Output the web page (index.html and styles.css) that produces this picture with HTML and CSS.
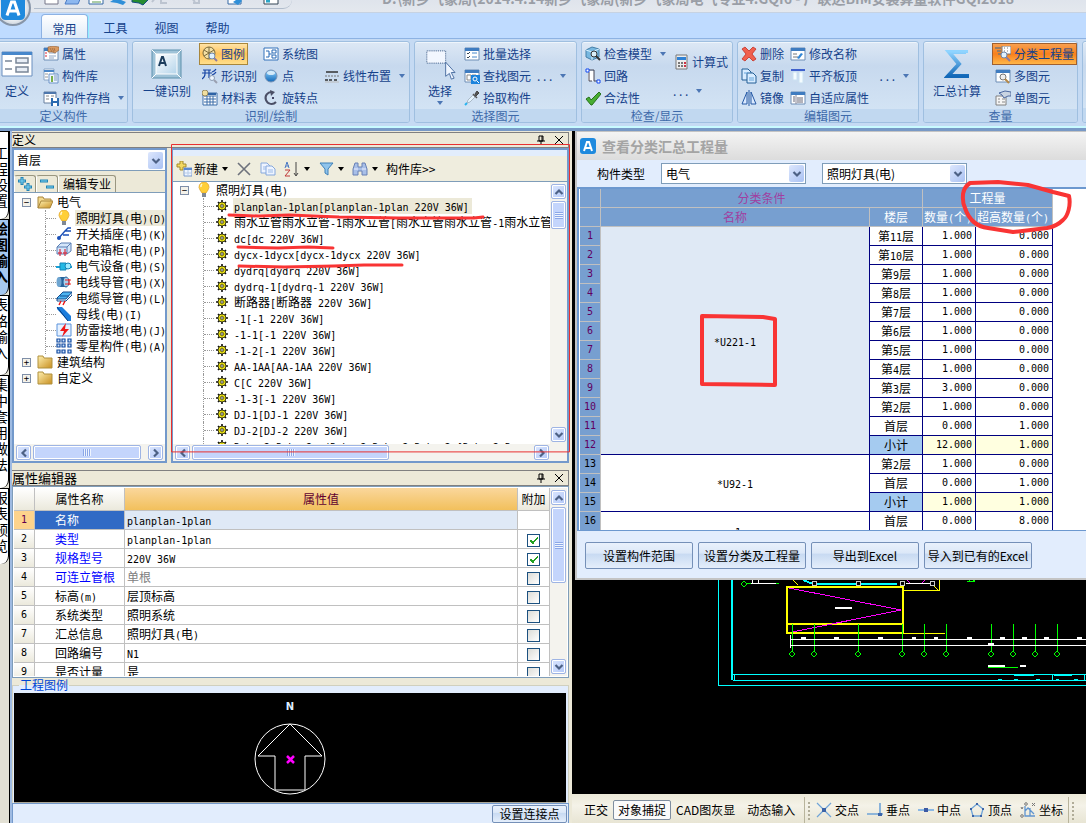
FILE: index.html
```
<!DOCTYPE html>
<html lang="zh-CN">
<head>
<meta charset="utf-8">
<title>安装算量软件</title>
<link rel="stylesheet" href="styles.css">
</head>
<body>
<svg class="defs" width="0" height="0" aria-hidden="true">
<defs>
<linearGradient id="gold" x1="0" y1="0" x2="1" y2="1"><stop offset="0" stop-color="#fff0b0"/><stop offset="1" stop-color="#c88f20"/></linearGradient>
<linearGradient id="blue" x1="0" y1="0" x2="0" y2="1"><stop offset="0" stop-color="#8fd4ff"/><stop offset="1" stop-color="#1268b8"/></linearGradient>
<linearGradient id="glass" x1="0" y1="0" x2="1" y2="1"><stop offset="0" stop-color="#fff"/><stop offset="1" stop-color="#b4d4ea"/></linearGradient>
<symbol id="win" viewBox="0 0 16 16"><path d="M1 2h14v12H1z" fill="#fff" stroke="#6d8db5"/><path d="M1 2h14v3H1z" fill="#3f7cc0"/></symbol>
<symbol id="lens" viewBox="0 0 16 16"><path d="M11 11l4 4" stroke="#8c7aa0" stroke-width="2"/><circle cx="9" cy="9" r="3" fill="#dff1ff" stroke="#7187a8"/></symbol>
<symbol id="prop" viewBox="0 0 16 16"><use href="#win"/><path d="M2 7h2M2 10h2" stroke="#d23"/><path d="M6 7h7M6 10h7M6 12h5" stroke="#90a8c8"/><path d="M5 1l5-1 6 1v3l-4 3-3-1-4 0z" fill="#d99a62" stroke="#8a5a34" stroke-width=".6"/><path d="M7 2l2 4M9 2l2 4M11 2l1 3" stroke="#8a5a34" stroke-width=".6"/></symbol>
<symbol id="lib" viewBox="0 0 16 16"><path d="M1 1h10v11H1z" fill="#fff" stroke="#8aa5c5"/><path d="M1 3h10" stroke="#4a86c8" stroke-width="2"/><path d="M2 6h3M2 9h3" stroke="#999"/><path d="M6 6h9v9H6z" fill="#eef5ff" stroke="#6f95c8"/><path d="M8 8h2v6H8z" fill="#79b04a"/><path d="M11 8h3M11 10h3M11 12h3" stroke="#7e9ac0"/></symbol>
<symbol id="save" viewBox="0 0 16 16"><path d="M1 2h12v11H1z" fill="#fff" stroke="#667f9f"/><path d="M1 3h12" stroke="#4e77ac" stroke-width="2"/><path d="M3 6h3M3 9h3M8 6h3" stroke="#888"/><path d="M8 8h8v8H8z" fill="#2a6ab0"/><path d="M10 8h4v3h-4zM10 13h4v3h-4z" fill="#fff"/></symbol>
<symbol id="legend" viewBox="0 0 16 16"><circle cx="7" cy="7" r="6" fill="#f4e0a4" stroke="#7a6a3c"/><path d="M2 4l10 6M12 4L2 10M7 1v12" stroke="#7a6a3c"/><path d="M12 12l3 3" stroke="#8c7aa0" stroke-width="2"/><circle cx="10" cy="10" r="3" fill="#dff1ff" stroke="#7187a8"/></symbol>
<symbol id="shape" viewBox="0 0 16 16"><path d="M1 2h8M0 5h10M3 2v4q0 3-3 5M7 2v8M14 1q-1 2-4 3M14 4q-1 2-4 3" stroke="#1745a4" fill="none" stroke-width="1.200"/><path d="M12 12l3 3" stroke="#9aa0b0" stroke-width="2"/><circle cx="10" cy="10" r="2.500" fill="#eef6ff" stroke="#8c9cb4"/></symbol>
<symbol id="mat" viewBox="0 0 16 16"><path d="M1 3h14v12H1z" fill="#fff" stroke="#3a6da8"/><path d="M2 6h12M2 9h12M2 12h12M5 6v9M8 6v9M11 6v9" stroke="#3a6da8"/><path d="M6 4h8" stroke="#2d62a5" stroke-width="2"/><circle cx="3" cy="3" r="3" fill="#f0dfa0" stroke="#7a6a3c" stroke-width=".7"/></symbol>
<symbol id="sys" viewBox="0 0 16 16"><path d="M1 2h14v12H1z" fill="#fff" stroke="#3573ba"/><path d="M3 5h3M3 11h3M6 8h3M6 5v6M9 4h4v3H9zM9 9h4v3H9z" fill="none" stroke="#2769b4"/></symbol>
<symbol id="dot" viewBox="0 0 16 16"><circle cx="8" cy="8" r="6" fill="url(#blue)" stroke="#7892b5"/><ellipse cx="8" cy="5" rx="4" ry="2" fill="#fff" opacity=".7"/></symbol>
<symbol id="rot" viewBox="0 0 16 16"><path d="M9 2a6 6 0 1 0 4 10" fill="none" stroke="#4b4f66" stroke-width="2"/><path d="M7 0l5 2-4 4z" fill="#4b4f66"/><path d="M9 8h2" stroke="#446" stroke-width="2"/></symbol>
<symbol id="lines" viewBox="0 0 16 16"><path d="M2 4h12M1 12h3M5 12h3M10 12h3" stroke="#333" stroke-width="1.3"/><path d="M1 8h14" stroke="#777" stroke-dasharray="2 1"/><path d="M1 14h14" stroke="#bbb"/></symbol>
<symbol id="check" viewBox="0 0 16 16"><use href="#win"/><path d="M3 7l1 1 2-2M3 11l1 1 2-2" fill="none" stroke="#345"/><path d="M8 7h5M8 11h5" stroke="#4989cc"/></symbol>
<symbol id="find" viewBox="0 0 16 16"><use href="#win"/><path d="M3 7h4v5H3zM8 7h4v3H8z" fill="none" stroke="#888"/><path d="M7 7h9v9H7z" fill="#1c83dc"/><circle cx="11" cy="11" r="2" fill="none" stroke="#fff"/><path d="M13 13l2 2" stroke="#fff"/></symbol>
<symbol id="pick" viewBox="0 0 16 16"><path d="M3 13l1-3 5-5 2 2-5 5z" fill="#e6f5ff" stroke="#9eacba" stroke-width=".8"/><path d="M9 4l4 4" stroke="#555" stroke-width="1.500"/><path d="M11 4l2-3 2 2-3 3z" fill="#555" stroke="#444"/><path d="M1 15l2-2" stroke="#28b4f0" stroke-width="2"/></symbol>
<symbol id="model" viewBox="0 0 16 16"><path d="M1 4l6-3 7 2v8l-7 3-6-3z" fill="#78b8e0" stroke="#457fa8"/><path d="M1 4l6 2 7-3M7 6v8" fill="none" stroke="#d6f0ff"/><circle cx="9" cy="8" r="3" fill="#d8eef8" stroke="#333"/><path d="M11 10l4 4" stroke="#333" stroke-width="2"/></symbol>
<symbol id="loop" viewBox="0 0 16 16"><path d="M3 3h6v10H3z" fill="#fff"/><path d="M3 2h6v11h4M4 4v9h3" fill="none" stroke="#445"/><path d="M1 1h3v3H1zM12 12h3v3h-3z" fill="#fff" stroke="#1048f0"/></symbol>
<symbol id="tick" viewBox="0 0 16 16"><path d="M1 9l3-2 2 3 8-8 2 2-9 11H6z" fill="#48ad32" stroke="#27721c"/></symbol>
<symbol id="calc" viewBox="0 0 16 16"><path d="M3 1h11v14H3z" fill="#eee" stroke="#777"/><path d="M4 3h9v3H4z" fill="#2f81d4"/><path d="M5 9h2M8 9h2M5 12h2M8 12h2" stroke="#777" stroke-width="2"/><path d="M11 9h2M11 12h2" stroke="#c34" stroke-width="2"/></symbol>
<symbol id="del" viewBox="0 0 16 16"><path d="M1 3l3-2 4 4 4-4 3 2-4 5 4 5-3 2-4-4-4 4-3-2 4-5z" fill="#f0604f" stroke="#c43024" stroke-width=".8"/></symbol>
<symbol id="copy" viewBox="0 0 16 16"><path d="M1 1h6l3 3v8H1z" fill="#d8ecff" stroke="#235f96"/><path d="M6 5h6l3 3v7H6z" fill="#d8ecff" stroke="#235f96"/><path d="M3 5h4M8 10h5M8 12h5" stroke="#65a4da"/></symbol>
<symbol id="pages" viewBox="0 0 16 16"><path d="M1 2h6l3 3v7H1z" fill="#eef4ff" stroke="#86a8dc"/><path d="M6 5h6l3 3v6H6z" fill="#eef4ff" stroke="#86a8dc"/><path d="M3 6h3M3 8h3M8 9h5M8 11h5" stroke="#9dbbe8"/></symbol>
<symbol id="mirror" viewBox="0 0 16 16"><path d="M6 2v12H1zM10 2v12h5z" fill="#dbeaff" stroke="#2458a4"/><path d="M8 0v16" stroke="#2458a4"/></symbol>
<symbol id="rename" viewBox="0 0 16 16"><use href="#win"/><path d="M3 8h4M3 11h5" stroke="#777"/><path d="M7 12l4-5 2 1-4 5z" fill="#3387d6"/></symbol>
<symbol id="align" viewBox="0 0 16 16"><path d="M1 2h14" stroke="#1239c0" stroke-width="1.500"/><path d="M3 4h4v8H3zM9 4h4v11H9z" fill="#f4fcff" stroke="#cbe2f2"/></symbol>
<symbol id="adapt" viewBox="0 0 16 16"><use href="#win"/><path d="M3 7h2M3 9h2M3 11h2M7 8h6M7 10h6M7 12h6" stroke="#667"/><path d="M6 5v9" stroke="#889"/></symbol>
<symbol id="classq" viewBox="0 0 16 16"><path d="M0 2h6M2 5h4M3 8h3" stroke="#777" stroke-width="1.4"/><path d="M7 0h9v8H7z" fill="#fff" stroke="#777"/><path d="M9 2h1M12 2h1M9 5h1M12 5h1" stroke="#777"/><use href="#lens"/></symbol>
<symbol id="multi" viewBox="0 0 16 16"><use href="#win"/><circle cx="8" cy="9" r="3" fill="#eee" stroke="#777"/><path d="M10 11l4 4" stroke="#b48848" stroke-width="2"/></symbol>
<symbol id="single" viewBox="0 0 16 16"><path d="M1 6h10v9H1z" fill="#f5f5f5" stroke="#808080"/><path d="M3 9h2M3 12h2M7 9h3M7 12h3" stroke="#888"/><path d="M4 3l6-2 6 1v4h-3l-4 2-2-3z" fill="#c9d4e2" stroke="#4c68a0"/></symbol>
<symbol id="bulb" viewBox="0 0 16 16"><path d="M8 0a5 5 0 0 1 4 8l-2 3H6L4 8a5 5 0 0 1 4-8z" fill="#ffcf38" stroke="#e0a020" stroke-width=".7"/><path d="M6 2a3 3 0 0 0-1 3" stroke="#fff8d8" fill="none" stroke-width="1.5"/><path d="M6 11h4v4H6z" fill="#808894"/></symbol>
<symbol id="open" viewBox="0 0 16 16"><path d="M1 14V3h5l1 2h7v3" fill="#f3d98c" stroke="#a8853c"/><path d="M1 14l3-7h12l-3 7z" fill="url(#gold)" stroke="#a8853c"/></symbol>
<symbol id="folder" viewBox="0 0 16 16"><path d="M1 14V2h5l1 2h8v10z" fill="url(#gold)" stroke="#b0903c"/></symbol>
<symbol id="switch" viewBox="0 0 16 16"><path d="M2 13L9 5h6M7 9h6M9 5l3-3h3" stroke="#1b50b8" fill="none" stroke-width="1.3"/><circle cx="3" cy="12" r="2" fill="#1b50b8"/></symbol>
<symbol id="box" viewBox="0 0 16 16"><path d="M1 5l4-4h10v8l-4 3H1z" fill="#d4e6fa" stroke="#5a7fb4"/><path d="M1 5h10v7M11 5l4-4" fill="none" stroke="#5a7fb4"/><path d="M4 7v7M9 7v7M2 11h4M7 11h4" stroke="#d33d50" stroke-width="1.3"/></symbol>
<symbol id="equip" viewBox="0 0 16 16"><path d="M0 9h16" stroke="#16a0d8" stroke-width="2"/><path d="M4 5h6v7H4z" fill="#22b8e4" stroke="#1084b8"/><circle cx="12" cy="8" r="3" fill="#9ceaff" stroke="#1084b8"/></symbol>
<symbol id="pipe" viewBox="0 0 16 16"><path d="M3 3h8v10H3z" fill="#28649c"/><ellipse cx="3" cy="8" rx="2.500" ry="5" fill="#6fa5d0"/><ellipse cx="10" cy="8" rx="3" ry="5" fill="#a9d0ec" stroke="#28649c"/><path d="M9 6h6M9 10h6M13 5v6" stroke="#e22"/></symbol>
<symbol id="cable" viewBox="0 0 16 16"><path d="M1 8l6-6h9l-6 7H1z" fill="#4eb4f0" stroke="#114c90"/><path d="M1 8v3h9l6-6V2M4 6h9" fill="none" stroke="#114c90"/><path d="M5 11l-2 4M9 11l-2 4" stroke="#e11" stroke-width="1.4"/></symbol>
<symbol id="bus" viewBox="0 0 16 16"><path d="M1 1h5l9 9v5h-3L1 3z" fill="#1c7ddc"/><path d="M1 1l11 14" stroke="#073c80"/></symbol>
<symbol id="bolt" viewBox="0 0 16 16"><path d="M1 2h14v12H1z" fill="#e6f1ff" stroke="#5b93dc"/><path d="M10 1L4 9h4l-2 6 7-8H9z" fill="#f01818"/></symbol>
<symbol id="grid9" viewBox="0 0 16 16"><path d="M1 1h3v3H1zM6 1h3v3H6zM12 1h3v3h-3zM1 6h3v3H1zM6 6h3v3H6zM12 6h3v3h-3zM1 12h3v3H1zM6 12h3v3H6zM12 12h3v3h-3z" fill="#cfe3ff" stroke="#124ba0" stroke-width="1.2"/></symbol>
<symbol id="gear" viewBox="0 0 12 12"><path d="M6 0v12M0 6h12M2 2l8 8M10 2l-8 8" stroke="#111" stroke-width="1.600"/><circle cx="6" cy="6" r="4" fill="#f7ee18" stroke="#111" stroke-width=".8"/><path d="M6 2v8M2 6h8M3 3l6 6M9 3L3 9" stroke="#8c8400" stroke-width=".6"/><circle cx="6" cy="6" r="1.300" fill="#fff" stroke="#222" stroke-width=".8"/></symbol>
<symbol id="new" viewBox="0 0 16 16"><path d="M4 0h3v3h3v3H7v3H4V6H1V3h3z" fill="#f3d860" stroke="#a48b2c"/><path d="M8 7h8v8H8z" fill="#eef5ff" stroke="#7a9bd0"/><path d="M8 8h8" stroke="#5a88d0" stroke-width="2"/><path d="M9 12h6M12 9v6" stroke="#b7cbe8"/></symbol>
<symbol id="cross" viewBox="0 0 16 16"><path d="M2 2l12 12M14 2L2 14" stroke="#6e727c" stroke-width="1.600"/></symbol>
<symbol id="funnel" viewBox="0 0 16 16"><path d="M2 2h13L10 8v6l-3-2V8z" fill="#8fc4ec" stroke="#3e80b8"/></symbol>
<symbol id="bino" viewBox="0 0 16 16"><path d="M3 2h3v4h4V2h3l2 6v6h-5v-4H6v4H1V8z" fill="#a8bfe8" stroke="#6880b4"/><path d="M2 8h4M10 8h4" stroke="#eef"/></symbol>
<symbol id="sort" viewBox="0 0 16 16"><path d="M1 7l2-6 2 6M2 5h3" fill="none" stroke="#4a78c4"/><path d="M1 9h5l-5 6h5" fill="none" stroke="#c03838"/><path d="M12 1v13M10 12l2 3 2-3" fill="none" stroke="#444"/></symbol>
<symbol id="pin" viewBox="0 0 10 10"><path d="M3 1h4v5H3zM1 6h8M5 6v4" fill="none" stroke="#000"/><path d="M6 1v5" stroke="#000"/></symbol>
<symbol id="x" viewBox="0 0 10 10"><path d="M1 1l8 8M9 1L1 9" stroke="#000"/></symbol>
<symbol id="chev" viewBox="0 0 10 10"><path d="M1.500 3L5 6.500 8.500 3" fill="none" stroke="#4d6185" stroke-width="2.200"/></symbol>
<symbol id="tri" viewBox="0 0 6 4"><path d="M0 0h6L3 4z" fill="currentColor"/></symbol>
<symbol id="logo" viewBox="0 0 16 16"><rect width="16" height="16" rx="3" fill="#1f8ade"/><path d="M4 13L7 4h2l3 9M5 10h6" fill="none" stroke="#fff" stroke-width="2"/></symbol>
<symbol id="snapx" viewBox="0 0 16 16"><path d="M1 1l14 14M15 1L1 15" stroke="#6fa4d8" stroke-width="1.200"/><path d="M6 6h4v4H6z" fill="#3c64a8"/></symbol>
<symbol id="snapv" viewBox="0 0 16 16"><path d="M0 12h16M13 1v11" stroke="#6fa4d8" stroke-width="1.600"/><path d="M11 11h4v3h-4z" fill="#3c64a8"/></symbol>
<symbol id="snapm" viewBox="0 0 16 16"><path d="M0 8h16" stroke="#8ab8e4" stroke-width="2"/><path d="M6 6h4v4H6z" fill="#3c5aa4"/></symbol>
<symbol id="snapp" viewBox="0 0 16 16"><path d="M8 2l6 5-2 7H4L2 7z" fill="none" stroke="#6fa4d8" stroke-width="1.300"/><path d="M7 1h2v2H7zM1 6h2v2H1zM13 6h2v2h-2zM3 13h2v2H3zM11 13h2v2h-2z" fill="#3c64a8"/></symbol>
<symbol id="snapc" viewBox="0 0 16 16"><path d="M5 4v10h10M5 9l3-3 6 6M10 6v8" fill="none" stroke="#5f94d0" stroke-width="1.300"/><path d="M1 5l1 2 1-2M12 1l3 3M15 1l-3 3" stroke="#777" fill="none"/><circle cx="2" cy="14" r="1.300" fill="none" stroke="#777"/><circle cx="6" cy="2" r="1.300" fill="none" stroke="#777"/></symbol>
</defs>
</svg>

<div class="app">
<header class="titlebar">
  <div class="quick">
    <svg width="260" height="12" aria-hidden="true"><path d="M11-6h13v10H11z" fill="#fff" stroke="#778"/><path d="M31 4l3-7h13l-3 7z" fill="#8db8f0" stroke="#4c7cc4"/><path d="M55-6h14v10H55z" fill="#fff" stroke="#3569a4"/><path d="M58-1h9M58 2h9" stroke="#5a9c50"/><path d="M76 2l6-4 10 4-3 3-6-2z" fill="#2f8fd8"/><path d="M98-2h8l8 2-5 5-4-2-7-1z" fill="#268c30" stroke="#124c80"/><path d="M122-3l-4 5M127-3v6h6M157-3l4 5M165-3v6h-6" fill="none" stroke="#bcc4d0" stroke-width="2"/><path d="M194-4h13v8h-13z" fill="#fff" stroke="#3569a4"/><path d="M199 2l6-4 3 3-4 4z" fill="#2f8fd8"/><path d="M230-4h14v8h-14z" fill="#fff" stroke="#345"/><path d="M232 1h4" stroke="#2aa5c8" stroke-width="3"/></svg>
  </div>
  <h1 class="doc">D:\新乡气象局(2014.4.14新乡气象局(新乡气象局电气专业4.GQI6 - 广联达BIM安装算量软件GQI2018</h1>
  <button class="orb" aria-label="菜单"><svg width="24" height="24"><use href="#logo"/></svg></button>
</header>
<nav class="tabs"><button class="tab on">常用</button><button class="tab">工具</button><button class="tab">视图</button><button class="tab">帮助</button></nav>

<section class="ribbon">
  <div class="group g1"><div class="cells">
    <button class="big"><svg width="32" height="28" viewBox="0 0 32 28"><path d="M1 2h30v24H1z" fill="#fff" stroke="#6b8fbf"/><path d="M1 2h30v3H1z" fill="#4787cb"/><path d="M4 11h7M4 19h7M15 8h12v5H15zM15 17h12v5H15z" fill="#e8eef6" stroke="#7a8798" stroke-width="1.500"/></svg><span>定义</span></button>
    <div class="col"><button class="cmd"><svg><use href="#prop"/></svg>属性</button><button class="cmd"><svg><use href="#lib"/></svg>构件库</button><button class="cmd"><svg><use href="#save"/></svg>构件存档<svg class="dd"><use href="#tri"/></svg></button></div>
  </div><h2>定义构件</h2></div>
  <div class="group g2"><div class="cells">
    <button class="big"><svg width="32" height="30" viewBox="0 0 32 30"><path d="M1 1h29v28H1z" fill="#9fc3d8" stroke="#5d90ac"/><path d="M1 1l5 5M30 1l-5 5M1 29l5-5M30 29l-5-5" stroke="#fff"/><path d="M5 5h21v20H5z" fill="url(#glass)" stroke="#fff"/><path d="M8 17l3-9h1l3 9M9 14h5" fill="none" stroke="#1c3d5c" stroke-width="2"/></svg><span>一键识别</span></button>
    <div class="col"><button class="cmd hot"><svg><use href="#legend"/></svg>图例</button><button class="cmd"><svg><use href="#shape"/></svg>形识别</button><button class="cmd"><svg><use href="#mat"/></svg>材料表</button></div>
    <div class="col"><button class="cmd"><svg><use href="#sys"/></svg>系统图</button><button class="cmd"><svg><use href="#dot"/></svg>点</button><button class="cmd"><svg><use href="#rot"/></svg>旋转点</button></div>
    <div class="col mid"><button class="cmd"><svg><use href="#lines"/></svg>线性布置<svg class="dd"><use href="#tri"/></svg></button></div>
  </div><h2>识别/绘制</h2></div>
  <div class="group g3"><div class="cells">
    <button class="big"><svg width="32" height="34" viewBox="0 0 32 34"><path d="M2 2h20v13H2z" fill="#f2f7ff" stroke="#33527e" stroke-dasharray="1 1"/><path d="M22 14v15l4-3 2 6 3-1-3-6h4z" fill="#eef5ff" stroke="#4a6da0"/></svg><span>选择</span><svg class="dd"><use href="#tri"/></svg></button>
    <div class="col"><button class="cmd"><svg><use href="#check"/></svg>批量选择</button><button class="cmd"><svg><use href="#find"/></svg>查找图元</button><button class="cmd"><svg><use href="#pick"/></svg>拾取构件</button></div>
    <div class="col mid"><button class="cmd more">. . .<svg class="dd"><use href="#tri"/></svg></button></div>
  </div><h2>选择图元</h2></div>
  <div class="group g4"><div class="cells">
    <div class="col"><button class="cmd"><svg><use href="#model"/></svg>检查模型<svg class="dd"><use href="#tri"/></svg></button><button class="cmd"><svg><use href="#loop"/></svg>回路</button><button class="cmd"><svg><use href="#tick"/></svg>合法性</button></div>
    <div class="col two"><button class="cmd"><svg><use href="#calc"/></svg>计算式</button><button class="cmd more">. . .<svg class="dd"><use href="#tri"/></svg></button></div>
  </div><h2>检查/显示</h2></div>
  <div class="group g5"><div class="cells">
    <div class="col"><button class="cmd"><svg><use href="#del"/></svg>删除</button><button class="cmd"><svg><use href="#copy"/></svg>复制</button><button class="cmd"><svg><use href="#mirror"/></svg>镜像</button></div>
    <div class="col"><button class="cmd"><svg><use href="#rename"/></svg>修改名称</button><button class="cmd"><svg><use href="#align"/></svg>平齐板顶</button><button class="cmd"><svg><use href="#adapt"/></svg>自适应属性</button></div>
    <div class="col mid"><button class="cmd more">. . .<svg class="dd"><use href="#tri"/></svg></button></div>
  </div><h2>编辑图元</h2></div>
  <div class="group g6"><div class="cells">
    <button class="big"><svg width="26" height="30" viewBox="0 0 26 30"><path d="M22 4V3H5l10 12L4 27h19v-2" fill="none" stroke="url(#blue)" stroke-width="4"/></svg><span>汇总计算</span></button>
    <div class="col"><button class="cmd fire"><svg><use href="#classq"/></svg>分类工程量</button><button class="cmd"><svg><use href="#multi"/></svg>多图元</button><button class="cmd"><svg><use href="#single"/></svg>单图元</button></div>
  </div><h2>查量</h2></div>
  <div class="group g7"><div class="cells"></div><h2></h2></div>
</section>

<main class="work">
  <nav class="side">
    <button class="vt v1"><span>工程设置</span></button><button class="vt on"><span>绘图输入</span></button><button class="vt v3"><span>表格输入</span></button><button class="vt v4"><span>集中套用做法</span></button><button class="vt v5"><span>报表预览</span></button>
  </nav>

  <div class="dock">
    <header class="cap"><h2>定义</h2><svg class="s10"><use href="#pin"/></svg><svg class="s10"><use href="#x"/></svg></header>
    <div class="define">
      <section class="frame kinds">
        <label class="combo floor"><select aria-label="楼层"><option>首层</option></select><span class="arrow"><svg class="s10"><use href="#chev"/></svg></span></label>
        <div class="minitabs"><button aria-label="展开"><svg width="16" height="16"><path d="M5 1v8M1 5h8M11 7v8M7 11h8" stroke="#2383b4" stroke-width="3"/><path d="M5 2v6M2 5h6M11 8v6M8 11h6" stroke="#7fd4f4"/></svg></button><button aria-label="折叠"><svg width="16" height="16"><path d="M1 5h8M7 11h8" stroke="#2383b4" stroke-width="3"/><path d="M2 5h6M8 11h6" stroke="#7fd4f4"/></svg></button><button class="txt">编辑专业</button></div>
        <ul class="tree t1">
          <li><i class="ex">−</i><svg><use href="#open"/></svg><span>电气</span></li>
          <li class="kid"><svg><use href="#bulb"/></svg><span class="sel">照明灯具<b>(</b>电<b>)(D)</b></span></li>
          <li class="kid"><svg><use href="#switch"/></svg><span>开关插座<b>(</b>电<b>)(K)</b></span></li>
          <li class="kid"><svg><use href="#box"/></svg><span>配电箱柜<b>(</b>电<b>)(P)</b></span></li>
          <li class="kid"><svg><use href="#equip"/></svg><span>电气设备<b>(</b>电<b>)(S)</b></span></li>
          <li class="kid"><svg><use href="#pipe"/></svg><span>电线导管<b>(</b>电<b>)(X)</b></span></li>
          <li class="kid"><svg><use href="#cable"/></svg><span>电缆导管<b>(</b>电<b>)(L)</b></span></li>
          <li class="kid"><svg><use href="#bus"/></svg><span>母线<b>(</b>电<b>)(I)</b></span></li>
          <li class="kid"><svg><use href="#bolt"/></svg><span>防雷接地<b>(</b>电<b>)(J)</b></span></li>
          <li class="kid last"><svg><use href="#grid9"/></svg><span>零星构件<b>(</b>电<b>)(A)</b></span></li>
          <li><i class="ex">+</i><svg><use href="#folder"/></svg><span>建筑结构</span></li>
          <li><i class="ex">+</i><svg><use href="#folder"/></svg><span>自定义</span></li>
        </ul>
        <div class="hbar"><i class="sb l"><svg class="s10"><use href="#chev"/></svg></i><i class="thumb k1"></i><i class="sb r"><svg class="s10"><use href="#chev"/></svg></i></div>
      </section>
      <section class="frame items">
        <div class="strip"></div>
        <div class="tools"><button><svg><use href="#new"/></svg>新建<svg class="dd"><use href="#tri"/></svg></button><button aria-label="删除"><svg><use href="#cross"/></svg></button><button aria-label="复制"><svg><use href="#pages"/></svg></button><button aria-label="排序"><svg><use href="#sort"/></svg><svg class="dd"><use href="#tri"/></svg></button><button aria-label="过滤"><svg><use href="#funnel"/></svg><svg class="dd"><use href="#tri"/></svg></button><button aria-label="查找"><svg><use href="#bino"/></svg><svg class="dd"><use href="#tri"/></svg></button><button>构件库&gt;&gt;</button></div>
        <div class="listrow">
          <ul class="tree t2">
            <li class="root"><i class="ex">−</i><svg><use href="#bulb"/></svg><span>照明灯具<b>(</b>电<b>)</b></span></li>
            <li class="kid"><svg><use href="#gear"/></svg><span class="sel"><b>planplan-1plan[planplan-1plan 220V 36W]</b></span></li>
            <li class="kid"><svg><use href="#gear"/></svg><span>雨水立管雨水立管<b>-1</b>雨水立管<b>[</b>雨水立管雨水立管<b>-1</b>雨水立管</span></li>
            <li class="kid"><svg><use href="#gear"/></svg><span><b>dc[dc 220V 36W]</b></span></li>
            <li class="kid"><svg><use href="#gear"/></svg><span><b>dycx-1dycx[dycx-1dycx 220V 36W]</b></span></li>
            <li class="kid"><svg><use href="#gear"/></svg><span><b>dydrq[dydrq 220V 36W]</b></span></li>
            <li class="kid"><svg><use href="#gear"/></svg><span><b>dydrq-1[dydrq-1 220V 36W]</b></span></li>
            <li class="kid"><svg><use href="#gear"/></svg><span>断路器<b>[</b>断路器<b> 220V 36W]</b></span></li>
            <li class="kid"><svg><use href="#gear"/></svg><span><b>-1[-1 220V 36W]</b></span></li>
            <li class="kid"><svg><use href="#gear"/></svg><span><b>-1-1[-1 220V 36W]</b></span></li>
            <li class="kid"><svg><use href="#gear"/></svg><span><b>-1-2[-1 220V 36W]</b></span></li>
            <li class="kid"><svg><use href="#gear"/></svg><span><b>AA-1AA[AA-1AA 220V 36W]</b></span></li>
            <li class="kid"><svg><use href="#gear"/></svg><span><b>C[C 220V 36W]</b></span></li>
            <li class="kid"><svg><use href="#gear"/></svg><span><b>-1-3[-1 220V 36W]</b></span></li>
            <li class="kid"><svg><use href="#gear"/></svg><span><b>DJ-1[DJ-1 220V 36W]</b></span></li>
            <li class="kid"><svg><use href="#gear"/></svg><span><b>DJ-2[DJ-2 220V 36W]</b></span></li>
            <li class="kid"><svg><use href="#gear"/></svg><span><b>Dqhx-2-Dqhx-2--(Dqhx-2-Dqhx-2-Dqhx-2-[Dqhx-2-D</b></span></li>
          </ul>
          <div class="vbar"><i class="sb u"><svg class="s10"><use href="#chev"/></svg></i><i class="thumb v k3"></i><i class="sb d"><svg class="s10"><use href="#chev"/></svg></i></div>
        </div>
        <div class="hbar corner"><i class="sb l"><svg class="s10"><use href="#chev"/></svg></i><i class="thumb k2"></i><i class="sb r"><svg class="s10"><use href="#chev"/></svg></i></div>
      </section>
    </div>

    <header class="cap edit"><h2>属性编辑器</h2><svg class="s10"><use href="#pin"/></svg><svg class="s10"><use href="#x"/></svg></header>
    <div class="props">
      <div class="clip">
      <table class="pt">
        <colgroup><col class="c1"><col class="c2"><col><col class="c4"></colgroup>
        <thead><tr><th></th><th>属性名称</th><th class="val">属性值</th><th>附加</th></tr></thead>
        <tbody>
        <tr class="cur"><th>1</th><td class="n">名称</td><td><b>planplan-1plan</b></td><td class="off"></td></tr>
        <tr><th>2</th><td class="n k">类型</td><td><b>planplan-1plan</b></td><td><input type="checkbox" checked aria-label="类型"></td></tr>
        <tr><th>3</th><td class="n k">规格型号</td><td><b>220V 36W</b></td><td><input type="checkbox" checked aria-label="规格型号"></td></tr>
        <tr><th>4</th><td class="n k">可连立管根</td><td class="dim">单根</td><td><input type="checkbox" aria-label="可连立管根"></td></tr>
        <tr><th>5</th><td class="n">标高<b>(m)</b></td><td>层顶标高</td><td><input type="checkbox" aria-label="标高"></td></tr>
        <tr><th>6</th><td class="n">系统类型</td><td>照明系统</td><td><input type="checkbox" aria-label="系统类型"></td></tr>
        <tr><th>7</th><td class="n">汇总信息</td><td>照明灯具<b>(</b>电<b>)</b></td><td><input type="checkbox" aria-label="汇总信息"></td></tr>
        <tr><th>8</th><td class="n">回路编号</td><td><b>N1</b></td><td><input type="checkbox" aria-label="回路编号"></td></tr>
        <tr><th>9</th><td class="n">是否计量</td><td>是</td><td><input type="checkbox" aria-label="是否计量"></td></tr>
        </tbody>
      </table>
      </div>
      <div class="vbar"><i class="sb u"><svg class="s10"><use href="#chev"/></svg></i><i class="thumb v k4"></i><i class="sb d"><svg class="s10"><use href="#chev"/></svg></i></div>
    </div>
    <fieldset class="legend"><legend>工程图例</legend>
      <div class="symbol"><svg width="76" height="104" viewBox="0 0 76 104"><text x="38" y="17" text-anchor="middle">N</text><g fill="none" stroke="#fff"><circle cx="38" cy="66" r="35"/><path d="M38 31L6 63h17v34h30V63h17z"/></g><path d="M35 63l7 7M42 63l-7 7" stroke="#f0f" stroke-width="2.500"/></svg></div>
    </fieldset>
    <footer class="foot"><button class="btn small">设置连接点</button></footer>
  </div>

  <div class="stage">
    <section class="dialog">
      <header class="dt"><svg width="16" height="16"><use href="#logo"/></svg><h2>查看分类汇总工程量</h2></header>
      <div class="filters"><label for="kind">构件类型</label><span class="combo"><select id="kind"><option>电气</option></select><span class="arrow"><svg class="s10"><use href="#chev"/></svg></span></span><span class="combo"><select aria-label="构件"><option>照明灯具(电)</option></select><span class="arrow"><svg class="s10"><use href="#chev"/></svg></span></span></div>
      <div class="gridbox">
      <table class="qt">
        <colgroup><col class="q1"><col class="q2"><col class="q3"><col class="q3"><col class="q5"></colgroup>
        <thead><tr><th></th><th colspan="2" class="p">分类条件</th><th colspan="2">工程量</th></tr>
        <tr><th></th><th class="p">名称</th><th>楼层</th><th class="r">数量<b>(</b>个<b>)</b></th><th class="r">超高数量<b>(</b>个<b>)</b></th></tr></thead>
        <tbody>
        <tr><th>1</th><td rowspan="12" class="pick"><b>*U221-1</b></td><td>第<b>11</b>层</td><td>1.000</td><td>0.000</td></tr>
        <tr><th>2</th><td>第<b>10</b>层</td><td>1.000</td><td>0.000</td></tr>
        <tr><th>3</th><td>第<b>9</b>层</td><td>1.000</td><td>0.000</td></tr>
        <tr><th>4</th><td>第<b>8</b>层</td><td>1.000</td><td>0.000</td></tr>
        <tr><th>5</th><td>第<b>7</b>层</td><td>1.000</td><td>0.000</td></tr>
        <tr><th>6</th><td>第<b>6</b>层</td><td>1.000</td><td>0.000</td></tr>
        <tr><th>7</th><td>第<b>5</b>层</td><td>1.000</td><td>0.000</td></tr>
        <tr><th>8</th><td>第<b>4</b>层</td><td>1.000</td><td>0.000</td></tr>
        <tr><th>9</th><td>第<b>3</b>层</td><td>3.000</td><td>0.000</td></tr>
        <tr><th>10</th><td>第<b>2</b>层</td><td>1.000</td><td>0.000</td></tr>
        <tr><th>11</th><td>首层</td><td>0.000</td><td>1.000</td></tr>
        <tr class="sub"><th>12</th><td>小计</td><td>12.000</td><td>1.000</td></tr>
        <tr class="lt"><th>13</th><td rowspan="3" class="nm"><b>*U92-1</b></td><td>第<b>2</b>层</td><td>1.000</td><td>0.000</td></tr>
        <tr class="lt"><th>14</th><td>首层</td><td>0.000</td><td>1.000</td></tr>
        <tr class="sub lt"><th>15</th><td>小计</td><td>1.000</td><td>1.000</td></tr>
        <tr class="lt"><th>16</th><td rowspan="2" class="nm"><b>-1</b></td><td>首层</td><td>0.000</td><td>8.000</td></tr>
        <tr class="sub lt"><th>17</th><td>小计</td><td>0.000</td><td>8.000</td></tr>
        </tbody>
      </table>
      </div>
      <footer class="acts"><button class="btn">设置构件范围</button><button class="btn">设置分类及工程量</button><button class="btn">导出到Excel</button><button class="btn">导入到已有的Excel</button></footer>
    </section>
    <div class="canvas">
      <svg width="514" height="214" viewBox="572 580 514 214" shape-rendering="crispEdges" fill="none">
        <g stroke="#0ff"><path d="M718.500 580v105.500H1086M732.500 674.500H1086M732.500 680.500H1086M734.500 674v6M1052.500 674v6M1084.500 674v6"/><path d="M732 580v100" stroke-width="2"/><path d="M803 580l10 4h84" stroke-width="2"/><path d="M998 679h4M1014 675.500h20M1014 679h4M1036 679h4M1054 675.500h18M1056 679h3M1074 679h4"/></g>
        <g stroke="#ff0"><path d="M787 587h116v46H787zM787 624h116" stroke-width="2"/><path d="M903 633.500h42M904 590.500h35.500V580M793 580l5 5M933 585l6 6"/></g>
        <g stroke="#f0f"><path d="M789 588l112 22-109 22M907 580l3 3h12l3-3"/></g>
        <g stroke="#0f0"><path d="M792.500 624v28M814.500 624v28M858.500 624v28M902.500 624v28M924.500 624v28M946.500 624v28M991.500 624v28M1013.500 624v28M1035.500 624v28M1057.500 624v28"/><path d="M792 651l3 3-3 3-3-3zM814 651l3 3-3 3-3-3zM858 651l3 3-3 3-3-3zM902 651l3 3-3 3-3-3zM924 651l3 3-3 3-3-3zM946 651l3 3-3 3-3-3zM991 651l3 3-3 3-3-3zM1013 651l3 3-3 3-3-3zM1035 651l3 3-3 3-3-3zM1057 651l3 3-3 3-3-3zM744 581l3 3-3 3-3-3zM747 583.500h32M988 667.500h30M967 581.500h8M969 580l2 2 4-2"/></g>
        <g stroke="#fff"><path d="M790.500 635v13M790 639.500h296M790 645.500h296M751 583.500h25M752.500 580v3M758.500 580v3M906 583.500h26"/><path d="M835 608h17M801 638h5M834 638h5M878 638h5M912 638h4M934 638h4M967 638h5M1000 638h5M1022 638h5M1044 638h5M1077 638h5M988 644h6" stroke-width="2"/><path d="M988 666h17M1020 666h6" stroke-width="2"/><path d="M812.500 581.500h4v4h-4zM856.500 581.500h4v4h-4zM900.500 581.500h4v4h-4zM930.500 581.500h4v4h-4z" fill="#000" stroke="#ccc"/></g>
      </svg>
    </div>
    <footer class="status">
      <div class="modes"><button>正交</button><button class="down">对象捕捉</button><button>CAD图灰显</button><button>动态输入</button></div>
      <div class="snaps"><button><svg><use href="#snapx"/></svg>交点</button><button><svg><use href="#snapv"/></svg>垂点</button><button><svg><use href="#snapm"/></svg>中点</button><button><svg><use href="#snapp"/></svg>顶点</button><button><svg><use href="#snapc"/></svg>坐标</button></div>
      <div class="snaps end"></div>
    </footer>
  </div>
</main>
</div>

<svg class="marks" width="1086" height="823" fill="none" stroke="#f93434" stroke-linecap="round" stroke-linejoin="round" aria-hidden="true">
  <path d="M171.500 451.500V144.500H569.500V451.500z" stroke="#e83030"/>
  <g stroke-width="3"><path d="M229 215l30 1 30-1 50 2 60 1h75l9-1"/><path d="M238 247l40 1 30-1 25 1"/><path d="M239 266l45 1 50-1 30-1h38"/></g>
  <g stroke-width="4"><path d="M702 316v68l73 1V319l-12-2-61-1"/><path d="M963 194c1-6 4-9 7-11l28-1 30 3 25 7 16 4c2 9-1 20-6 24-5 5-10 7-16 8l-34 4-25-4c-16-2-21-14-23-20-3-6-2-10-2-14z"/></g>
</svg>
</body>
</html>
```
FILE: styles.css
```
* { box-sizing: border-box; }
body { margin: 0; font: 12px/16px "Noto Sans CJK SC", sans-serif; color: #000; overflow: hidden; }
h1, h2, ul { margin: 0; padding: 0; font-size: 12px; font-weight: normal; list-style: none; }
button { font: inherit; color: inherit; border: 0; background: none; padding: 0; white-space: nowrap; }
b { font: 10px/12px "DejaVu Sans Mono", monospace; white-space: pre; }
i { font-style: normal; }
svg { flex: none; }
.defs { position: absolute; }
.marks { position: absolute; left: 0; top: 0; pointer-events: none; }
.s10 { width: 10px; height: 10px; }
.app { display: flex; flex-direction: column; height: 100vh; overflow: hidden; background: #ece9d8; }

/* title bar and tabs */
.titlebar { position: relative; z-index: 2; flex: none; display: flex; height: 13px; background: linear-gradient(#dfe4ec, #e4e8ee); border-bottom: 1px solid #c6d2e2; }
.quick { flex: none; width: 382px; padding-left: 34px; }
.quick svg { display: block; width: 258px; height: 9px; border-bottom: 1px solid #b0bccc; border-radius: 0 0 12px 0; }
.doc { color: #9a9ea6; font-size: 14px; font-weight: bold; line-height: 16px; margin-top: -10px; height: 16px; white-space: nowrap; }
.orb { position: absolute; left: -5px; top: -10px; width: 36px; height: 36px; border-radius: 50%; background: radial-gradient(#fff 40%, #ccd4de 75%); border: 2px solid #8795a8; display: grid; place-items: center; }
.tabs { flex: none; display: flex; height: 26px; padding: 1px 0 0 41px; background: #bfdbff; border-bottom: 1px solid #8db2e3; color: #15428b; }
.tab { width: 51px; padding-top: 4px; }
.tab.on { width: 47px; margin-right: 2px; background: linear-gradient(#fff, #dfebf8); border: 1px solid #8db2e3; border-bottom: 0; border-radius: 4px 4px 0 0; box-shadow: 1px 0 0 #8ff0ff; }

/* ribbon */
.ribbon { flex: none; display: flex; gap: 4px; height: 92px; padding: 2px 0 5px; background: #c5daf3; color: #15428b; border-bottom: 3px solid #7899c6; box-shadow: inset 0 -2px 0 #c8faff; overflow: hidden; }
.group { flex: none; display: flex; flex-direction: column; border: 1px solid #9fbfe0; border-radius: 3px; background: linear-gradient(#dde8f5, #c7d9ee 30%, #d6e6f6); box-shadow: inset 0 1px 0 #eef5fc; overflow: hidden; }
.group h2 { height: 15px; line-height: 14px; text-align: center; background: #c1d8f0; color: #3e6aaa; }
.cells { display: flex; height: 68px; padding-top: 1px; }
.g1 { width: 128px; border-left: 0; border-radius: 0 3px 3px 0; }
.g2 { width: 278px; }
.g3 { width: 163px; }
.g4 { width: 152px; }
.g5 { width: 182px; }
.g6 { width: 155px; }
.g7 { flex: 1 0 8px; border-radius: 3px 0 0 3px; }
.g2 .cells { padding-left: 6px; }
.g3 .cells { padding-left: 4px; }
.big { display: flex; flex-direction: column; align-items: center; padding-top: 6px; width: 56px; }
.big > svg:first-child { height: 30px; margin-bottom: 4px; }
.g1 .big { width: 34px; margin-right: 6px; }
.g2 .big { margin-right: 4px; }
.g3 .big { width: 42px; }
.g3 .big > svg:first-child { width: 36px; height: 32px; margin-bottom: 2px; }
.g6 .big { width: 60px; margin: 0 5px 0 3px; }
.g3 .big .dd { margin: 2px 0 0; }
.col { display: flex; flex-direction: column; align-items: flex-start; }
.cmd { display: flex; align-items: center; gap: 3px; height: 22px; padding: 0 2px; border: 1px solid transparent; }
.cmd svg { width: 16px; height: 16px; }
svg.dd, .cmd svg.dd { width: 6px; height: 4px; margin-left: 5px; color: #4c76b4; }
.mid { justify-content: center; }
.g5 .mid { margin-left: auto; padding-right: 6px; }
.g4 .two { padding-top: 8px; gap: 7px; margin-left: 1px; }
.hot { background: linear-gradient(#ffe3a6, #ffc35a 50%, #ffdf8c); border-color: #a8863c; }
.fire { background: linear-gradient(#f8a050, #f8801c 50%, #ffb648); border-color: #a06030; }

/* working area */
.work { flex: 1; display: flex; min-height: 0; }
.side { flex: none; width: 10px; overflow: hidden; border-right: 1px solid #000; background: #e2e0d4; }
.vt { display: flex; align-items: flex-start; width: 9px; overflow: hidden; background: #fff; border-top: 1px solid #000; border-right: 1px solid #000; border-radius: 0 0 8px 0; }
.vt span { flex: none; width: 14px; margin-left: -6px; font-size: 14px; line-height: 16px; white-space: normal; word-break: break-all; text-align: center; }
.v1 { height: 88px; padding-top: 12px; }
.vt.on { height: 76px; background: #a5c8f0; font-weight: bold; }
.v3 { height: 80px; }
.v4 { height: 113px; }
.v5 { height: 76px; }
.dock { flex: none; width: 562px; display: flex; flex-direction: column; border-left: 2px solid #9fbbe2; padding-right: 3px; }
.cap { flex: none; display: flex; align-items: center; gap: 8px; height: 16px; margin-top: 1px; padding-right: 4px; border: 1px solid #808080; border-left: 0; }
.cap h2 { flex: 1; line-height: 14px; }
.cap.edit { margin-top: 7px; }
.cap.edit h2 { font-size: 13px; }
.define { flex: none; display: flex; gap: 4px; height: 315px; }
.frame { display: flex; flex-direction: column; border: 2px solid #7399cb; background: #fff; min-width: 0; }
.kinds { flex: none; width: 155px; }
.items { flex: 1; }
.combo { position: relative; display: block; }
.combo select { width: 100%; height: 21px; appearance: none; border: 1px solid #7f9db9; background: #fff; font: inherit; color: #000; padding: 0 4px; border-radius: 0; }
.arrow { position: absolute; right: 2px; top: 2px; width: 15px; height: 17px; background: linear-gradient(135deg, #dde7fd, #a9c1f3); border-radius: 2px; display: grid; place-items: center; pointer-events: none; }
.floor select { border-width: 0 0 1px; padding-left: 3px; }
.minitabs { flex: none; display: flex; height: 22px; align-items: flex-end; background: #ece9d8; border-bottom: 1px solid #7f9db9; }
.minitabs button { display: flex; align-items: center; justify-content: center; width: 22px; height: 17px; border: 1px solid #999680; border-bottom: 0; border-left-color: #fff; border-radius: 3px 3px 0 0; }
.minitabs .txt { width: 58px; }
.tree { flex: 1; min-height: 0; min-width: 0; overflow: hidden; }
.tree li { display: flex; align-items: center; height: 16px; white-space: nowrap; }
.tree svg { width: 16px; height: 16px; }
.tree span { line-height: 16px; height: 16px; padding-left: 1px; }
.sel { background: #ece9d8; }
.ex { flex: none; display: block; width: 9px; height: 9px; border: 1px solid #7f8fa8; background: #f4f2ea; font: 9px/7px "DejaVu Sans Mono", monospace; text-align: center; }
.t1 { padding: 1px 2px 0 8px; }
.t1 .ex + svg { margin: 0 3px 0 6px; }
.t1 .kid { margin-left: 23px; border-left: 1px dotted #999; }
.t1 .kid::before, .t2 .kid::before { content: ""; flex: none; width: 10px; border-top: 1px dotted #999; }
.t1 .kid svg { margin-right: 3px; }
.t2 { padding-left: 7px; }
.t2 .root svg { margin: 0 3px 0 7px; }
.t2 .kid { margin-left: 23px; border-left: 1px dotted #999; }
.t2 .kid svg { width: 12px; height: 12px; margin: 0 5px 0 2px; }
.t2 span { padding: 0 3px 0 1px; }
.strip { flex: none; height: 6px; background: #e2edfc; }
.tools { flex: none; display: flex; align-items: center; gap: 8px; height: 26px; padding-left: 3px; background: #efedde; border-bottom: 1px solid #7f9db9; }
.tools button { display: flex; align-items: center; gap: 2px; }
.tools svg { width: 16px; height: 16px; }
.tools svg.dd { width: 6px; height: 4px; margin-left: 2px; color: #000; }
.listrow { flex: 1; display: flex; min-height: 0; }
.hbar { flex: none; display: flex; align-items: center; gap: 2px; height: 17px; padding: 0 2px; background: #f4f3ee; }
.vbar { flex: none; display: flex; flex-direction: column; align-items: center; gap: 2px; width: 17px; padding: 2px 0; background: #f4f3ee; }
.hbar.corner { padding-right: 18px; }
.sb, .thumb { display: grid; place-items: center; background: linear-gradient(135deg, #dbe6fe, #b3c8f8); border: 1px solid #9eb4e4; border-radius: 2px; box-shadow: inset 0 0 0 1px #fff; }
.thumb { background: #c4d5fc; }
.sb { flex: none; width: 15px; height: 15px; }
.sb.l svg { transform: rotate(90deg); }
.sb.r svg { transform: rotate(-90deg); }
.sb.u svg { transform: rotate(180deg); }
.hbar .r { margin-left: auto; }
.vbar .d { margin-top: auto; }
.thumb { height: 15px; }
.thumb::after { content: ""; width: 8px; height: 7px; background: repeating-linear-gradient(90deg, #8ca8e8 0 1px, #eef4fe 1px 2px); }
.thumb.v { width: 15px; }
.thumb.v::after { background: repeating-linear-gradient(#8ca8e8 0 1px, #eef4fe 1px 2px); }
.k1 { width: 108px; }
.k2 { width: 197px; }
.thumb.k3 { height: 28px; }
.thumb.k4 { height: 76px; }

/* property editor */
.props { flex: none; display: flex; height: 192px; border: 1px solid #7f9db9; background: #fff; padding: 1px; }
.clip { flex: 1; overflow: hidden; }
table { border-collapse: separate; border-spacing: 0; table-layout: fixed; }
th, td { padding: 0; height: 19px; font-weight: normal; line-height: 16px; white-space: nowrap; overflow: hidden; border: 0 solid #c0c0c0; border-width: 0 1px 1px 0; }
.pt { width: 100%; }
.c1 { width: 21px; }
.c2 { width: 90px; }
.c4 { width: 32px; }
.pt th { background: linear-gradient(#fff, #ebe9dc); }
.pt tbody th { font: 10px/16px "DejaVu Sans Mono", monospace; }
.pt thead th { height: 23px; }
.pt thead .val { background: linear-gradient(#fad79c, #f2c05c); color: #600030; }
.pt td { padding-left: 2px; }
.pt td.n { padding-left: 20px; }
.pt td:last-child { padding: 0; text-align: center; }
.k { color: #00f; }
.dim { color: #808080; }
.cur td { background: #dfe9f6; }
.cur td.off { background: #fff; }
.cur td.n { background: #316ac5; color: #fff; }
.pt .cur th { background: #fdd38c; color: #600050; }
input[type="checkbox"] { appearance: none; display: inline-block; vertical-align: middle; width: 13px; height: 13px; margin: 0; border: 1px solid #1c5180; background: linear-gradient(135deg, #dcdcd7, #fff); }
input[type="checkbox"]:checked { background: linear-gradient(135deg, transparent 42%, #21a121 42% 58%, transparent 58%) 4px 2px / 6px 7px no-repeat, linear-gradient(45deg, transparent 36%, #21a121 36% 64%, transparent 64%) 2px 5px / 4px 4px no-repeat, #fff; }
.legend { flex: 1; display: flex; min-width: 0; min-height: 0; margin: 0; padding: 0 2px 0 1px; border: 1px solid #d0d0bf; border-bottom: 0; background: #e2edfd; }
.legend legend { margin-left: 5px; padding: 0 1px; height: 15px; line-height: 14px; color: #0046d5; }
.symbol { width: 100%; height: 100%; background: #000; display: flex; justify-content: center; border-bottom: 1px solid #aca899; overflow: hidden; }
.symbol text { font: bold 10px "DejaVu Sans", sans-serif; fill: #dfeeff; }
.foot { flex: none; display: flex; justify-content: flex-end; height: 20px; padding: 1px 1px 0 0; background: #e2edfd; border: 1px solid #7399cb; border-bottom: 0; }
.btn { width: 108px; height: 27px; border: 1px solid #7590b8; border-radius: 2px; background: linear-gradient(#e9f1fc, #dce8f8 40%, #c8daf2 45%, #e4eefb); }
.btn.small { width: 75px; height: 18px; line-height: 16px; }

/* dialog and drawing */
.stage { flex: 1; min-width: 0; display: flex; flex-direction: column; background: #000; }
.dialog { flex: none; margin-left: 3px; background: #e2edfd; border: solid #c4c4c4; border-width: 1px 0 2px 2px; }
.dt { display: flex; align-items: center; gap: 6px; height: 28px; padding-left: 3px; background: linear-gradient(#f4f4f4, #dcdcdc); }
.dt h2 { font-size: 14px; font-weight: bold; line-height: 20px; color: #a4a4a4; }
.filters { display: flex; align-items: center; height: 27px; padding-left: 20px; }
.filters label { width: 64px; }
.filters .combo { width: 145px; margin-right: 16px; }
.gridbox { height: 344px; overflow: hidden; border: solid #6c98cf; border-width: 2px 0 1px 2px; background: #fff; padding-left: 1px; }
.qt { width: 473px; }
.q1 { width: 21px; }
.q2 { width: 269px; }
.q3 { width: 53px; }
.q5 { width: 77px; }
.qt th { background: #779fd0; color: #fff; text-align: center; }
.qt .p { color: #a040a0; }
.qt th.r { text-align: right; padding-right: 3px; }
.qt tbody th { font: 10px/16px "DejaVu Sans Mono", monospace; color: #600060; }
.qt tbody .lt th, .qt .lt th { color: #000; }
.qt td { border-color: #000080; text-align: center; }
.qt td:nth-last-child(1), .qt td:nth-last-child(2) { font: 10px/16px "DejaVu Sans Mono", monospace; text-align: right; padding-right: 3px; }
.qt .pick { background: #dfe9f5; }
.sub td { background: #ffffe0; }
.sub td:nth-last-child(3) { background: #a5cbf0; }
.acts { display: flex; gap: 5px; padding: 11px 8px 9px; }
.canvas { flex: 1; min-height: 0; overflow: hidden; }
.canvas svg { display: block; }
.status { flex: none; display: flex; height: 29px; padding-top: 3px; background: linear-gradient(#ece9d8, #f4f2e8 40%, #e8e5d4); }
.modes { display: flex; align-items: center; width: 233px; padding-left: 8px; border-right: 1px solid #b8b49c; }
.modes button { height: 20px; padding: 0 4px; margin-right: 1px; }
.modes .down { border: 1px solid #7f8ea0; border-radius: 2px; background: #fafafa; }
.modes button + .down + button { margin-right: 4px; }
.snaps { display: flex; align-items: center; gap: 8px; padding: 0 5px 0 11px; background: repeating-linear-gradient(#b0ac98 0 2px, transparent 2px 4px) 3px 5px / 2px 18px no-repeat; border-right: 1px solid #b8b49c; }
.snaps.end { border: 0; }
.snaps button { display: flex; align-items: center; gap: 3px; }
.snaps svg { width: 16px; height: 16px; }
```
